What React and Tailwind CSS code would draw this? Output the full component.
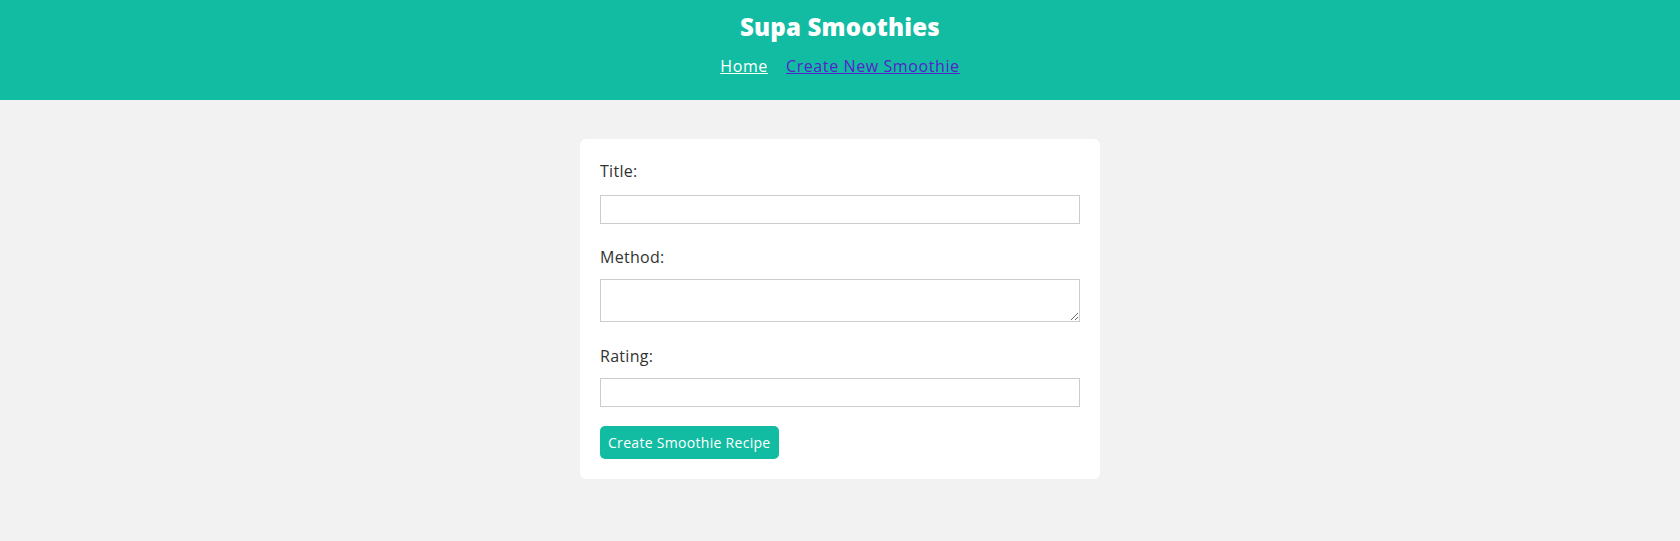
import { useState } from "react";

export default function App() {
  const [title, setTitle] = useState("");
  const [method, setMethod] = useState("");
  const [rating, setRating] = useState("");

  return (
    <div className="min-h-[541px] bg-[#f2f2f2] font-['Open_Sans',sans-serif] text-[#333]">
      {/* ---------------- NAV ---------------- */}
      <nav className="bg-[#12bca2] pt-[12px] pb-[22px] text-center">
        <h1 className="text-[24px] leading-[30px] font-extrabold text-white tracking-[0.2px]">
          Supa Smoothies
        </h1>
        <div className="mt-[12px] flex justify-center gap-[18px] text-[16px] leading-[24px] tracking-[0.6px]">
          <a href="#" className="text-white underline">
            Home
          </a>
          <a href="#" className="text-[#5522cc] underline">
            Create New Smoothie
          </a>
        </div>
      </nav>

      {/* ---------------- FORM ---------------- */}
      <div className="pt-[39px] pb-[62px]">
        <form
          className="mx-auto w-[520px] bg-white rounded-[6px] p-[20px]"
          onSubmit={(e) => e.preventDefault()}
        >
          <label className="block text-[16px] leading-[24px] tracking-[0.3px]">Title:</label>
          <input
            type="text"
            value={title}
            onChange={(e) => setTitle(e.target.value)}
            className="block w-full h-[29px] mt-[12px] mb-[21px] border border-[#ccc] px-[6px] text-[14px]"
          />

          <label className="block text-[16px] leading-[24px] tracking-[0.3px]">Method:</label>
          <textarea
            value={method}
            onChange={(e) => setMethod(e.target.value)}
            className="block w-full h-[43px] mt-[10px] mb-[22px] border border-[#ccc] px-[6px] text-[14px]"
          />

          <label className="block text-[16px] leading-[24px] tracking-[0.3px]">Rating:</label>
          <input
            type="number"
            value={rating}
            onChange={(e) => setRating(e.target.value)}
            className="block w-full h-[29px] mt-[10px] border border-[#ccc] px-[6px] text-[14px]"
          />

          <button className="mt-[19px] h-[33px] px-[8px] rounded-[5px] bg-[#12bca2] text-white text-[14px] tracking-[0.3px] font-medium">
            Create Smoothie Recipe
          </button>
        </form>
      </div>
    </div>
  );
}
